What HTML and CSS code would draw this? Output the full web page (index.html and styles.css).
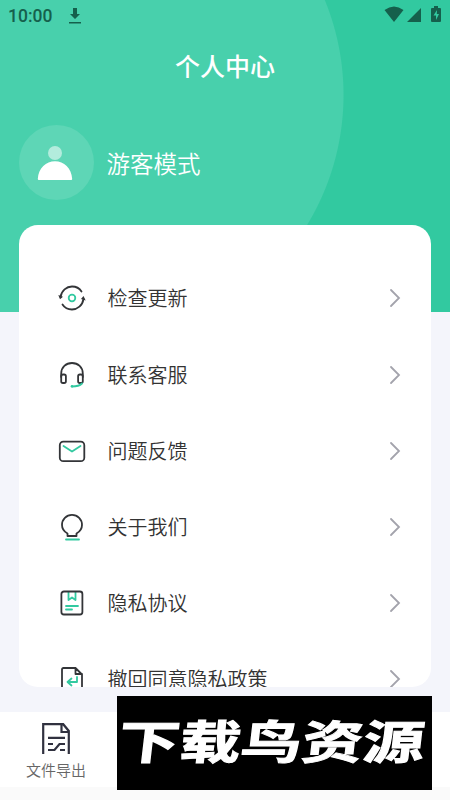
FILE: index.html
```html
<!DOCTYPE html>
<html lang="zh-CN">
<head>
<meta charset="utf-8">
<title>个人中心</title>
<link rel="stylesheet" href="styles.css">
</head>
<body>
<div class="screen">
  <div class="backdrop"></div>
  <header class="status">
    <span class="time">10:00</span>
    <svg class="download" width="14" height="18" viewBox="0 0 14 18"><path d="M5 1h4v6h3l-5 5-5-5h3zM1 15h12v1.5H1z"/></svg>
    <svg class="signals" width="58" height="18" viewBox="0 0 58 18"><path d="M0.5 4Q10-3 19.500 4L10 16zM23 16L37 2v14zM47 3q0-1 1-1h2V0h4v2h2q1 0 1 1v12q0 1-1 1h-8q-1 0-1-1z"/><path class="bolt" d="M53 4l-3.500 5.500H52V14l3-6h-2.200z"/></svg>
  </header>
  <h1>个人中心</h1>
  <section class="profile">
    <div class="avatar"><svg width="36" height="36" viewBox="0 0 36 36"><circle cx="18" cy="8" r="7" opacity=".53"/><path d="M.8 34C1.500 23 9 16.300 18 16.300S34.500 23 35.200 34q0 1-1 1H1.800q-1 0-1-1z"/></svg></div>
    <span class="name">游客模式</span>
  </section>
  <main class="card">
    <div class="row"><svg class="icon" viewBox="0 0 28 28"><path d="M2.500 13C3.500 6.500 8.500 2.500 14 2.500c4 0 7.300 1.500 9.500 5M25.500 15c-1 6.500-6 10.500-11.500 10.500-4 0-7.300-1.500-9.500-5"/><path class="dark" d="M.3 11l4.700 1.800-3 2.500zM27.700 16.500l-4.700-1.500 2.500-3z"/><circle class="green" cx="14" cy="14" r="3.300"/></svg><span>检查更新</span><svg class="arrow" viewBox="0 0 12 20"><path d="M2 2l8 8-8 8"/></svg></div>
    <div class="row"><svg class="icon" viewBox="0 0 28 28"><path d="M3.200 16v-3.500C3.200 6 8 2 14 2s10.800 4 10.800 10.500V16"/><rect x="3.200" y="13.500" width="4.700" height="8.500" rx="1.800"/><rect x="20.100" y="13.500" width="4.700" height="8.500" rx="1.800"/><path class="green" d="M24 22.500q-3 3-10 3"/><circle class="dot" cx="14" cy="25.300" r="1.300"/></svg><span>联系客服</span><svg class="arrow" viewBox="0 0 12 20"><path d="M2 2l8 8-8 8"/></svg></div>
    <div class="row"><svg class="icon" viewBox="0 0 28 28"><rect x="1.800" y="4.700" width="24.500" height="19.500" rx="3.500"/><path class="green" d="M5.500 9l8.500 5.500L22.500 9"/></svg><span>问题反馈</span><svg class="arrow" viewBox="0 0 12 20"><path d="M2 2l8 8-8 8"/></svg></div>
    <div class="row"><svg class="icon" viewBox="0 0 28 28"><path d="M9.500 23v-2.500C6 18.500 4 15.700 4 12A10 10 0 0 1 14 1.800 10 10 0 0 1 24 12c0 3.700-2 6.500-5.500 8.500V23z"/><path class="green" d="M8 26.500h13"/></svg><span>关于我们</span><svg class="arrow" viewBox="0 0 12 20"><path d="M2 2l8 8-8 8"/></svg></div>
    <div class="row"><svg class="icon" viewBox="0 0 28 28"><path class="green" d="M10.500 3v8l3.500-2.500 3.500 2.500V3M8 17h12M8 20.500h6"/><rect x="3.400" y="2.500" width="21" height="23" rx="2.500"/></svg><span>隐私协议</span><svg class="arrow" viewBox="0 0 12 20"><path d="M2 2l8 8-8 8"/></svg></div>
    <div class="row"><svg class="icon" viewBox="0 0 28 28"><path d="M17 3H5.500Q4 3 4 4.500v20h20V9.500L17.500 3v6H24"/><path class="green" d="M19 12v5H10m3.500-3.500L9.500 17l4 3.500"/></svg><span>撤回同意隐私政策</span><svg class="arrow" viewBox="0 0 12 20"><path d="M2 2l8 8-8 8"/></svg></div>
  </main>
  <nav class="tabs">
    <div class="tab"><svg width="28" height="32" viewBox="0 0 28 32"><path d="M1.200 31V1.200h20L26.800 8v23M19.500 1.500V9h7M6 14.800h17M6 21h5M6 27h6.500l5-6H23M18 27h5"/></svg><span>文件导出</span></div>
  </nav>
  <div class="banner"><span>下载鸟资源</span></div>
</div>
</body>
</html>
```
FILE: styles.css
```css
* { box-sizing: border-box; }
body { margin: 0; font-family: "Noto Sans CJK SC", sans-serif; }
.screen {
  position: relative;
  display: flex;
  flex-direction: column;
  width: 450px;
  height: 800px;
  overflow: hidden;
  background: #f4f5fb;
  isolation: isolate;
}
.backdrop {
  position: absolute;
  z-index: -1;
  inset: 0 0 auto;
  height: 312px;
  background: radial-gradient(circle at 93.500px 95px, #48d0ac 249.500px, #32c9a0 250.500px);
}
.status {
  display: flex;
  align-items: center;
  height: 32px;
  padding: 0 8px;
  fill: #15604c;
  color: #15604c;
}
.time { width: 60px; font: 500 17.500px/32px Roboto, sans-serif; }
.download { margin-top: -1px; }
.signals { margin-left: auto; margin-top: -2px; }
.bolt { fill: #32c9a0; }
h1 {
  margin: 14px 0 0;
  height: 39px;
  color: #fff;
  text-align: center;
  font-size: 25px;
  line-height: 38px;
  font-weight: 500;
}
.profile { display: flex; align-items: center; gap: 12.500px; margin: 40px 19px 25px; height: 75px; color: #fff; }
.avatar { display: grid; place-items: center; width: 75px; height: 75px; border-radius: 50%; background: #5ed6b6; fill: #fff; }
.avatar svg { margin: 0 3px 0 0; }
.name { font-size: 23.500px; line-height: 36px; font-weight: 350; }
.card { flex: none; height: 462px; margin: 0 19px; padding-top: 35.300px; overflow: hidden; border-radius: 19px; background: #fff; }
.row { display: flex; align-items: center; height: 76.200px; padding: 0 30px 0 39.300px; color: #333; font-size: 20px; line-height: 30px; font-weight: 350; }
.icon { width: 28px; height: 28px; margin-right: 21.200px; fill: none; stroke: #333538; stroke-width: 1.800; stroke-linejoin: round; stroke-linecap: round; }
.icon .green { stroke: #32c9a0; }
.icon .dot { fill: #32c9a0; stroke: none; }
.icon .dark { fill: #333538; stroke: none; }
.arrow { width: 12px; height: 20px; margin-left: auto; fill: none; stroke: #a3a3ac; stroke-width: 1.800; stroke-linecap: round; }
.tabs { height: 75px; margin-top: 25px; background: #fff; box-shadow: 0 13px #fafafa; }
.tab { display: flex; flex-direction: column; align-items: center; width: 112px; padding-top: 11px; color: #666; font-size: 15px; line-height: 22px; font-weight: 350; }
.tab svg { margin-bottom: 4px; fill: none; stroke: #30313f; stroke-width: 2.200; }
.banner {
  position: absolute;
  left: 117px;
  top: 696px;
  display: grid;
  place-items: center;
  width: 315px;
  height: 94px;
  background: #000;
  color: #fff;
}
.banner span { margin: 0 5px 8px 0; font-size: 46px; line-height: 70px; font-weight: 700; white-space: nowrap; -webkit-text-stroke: 1px #fff; transform: scaleX(1.330) skewX(-5deg); }
```
